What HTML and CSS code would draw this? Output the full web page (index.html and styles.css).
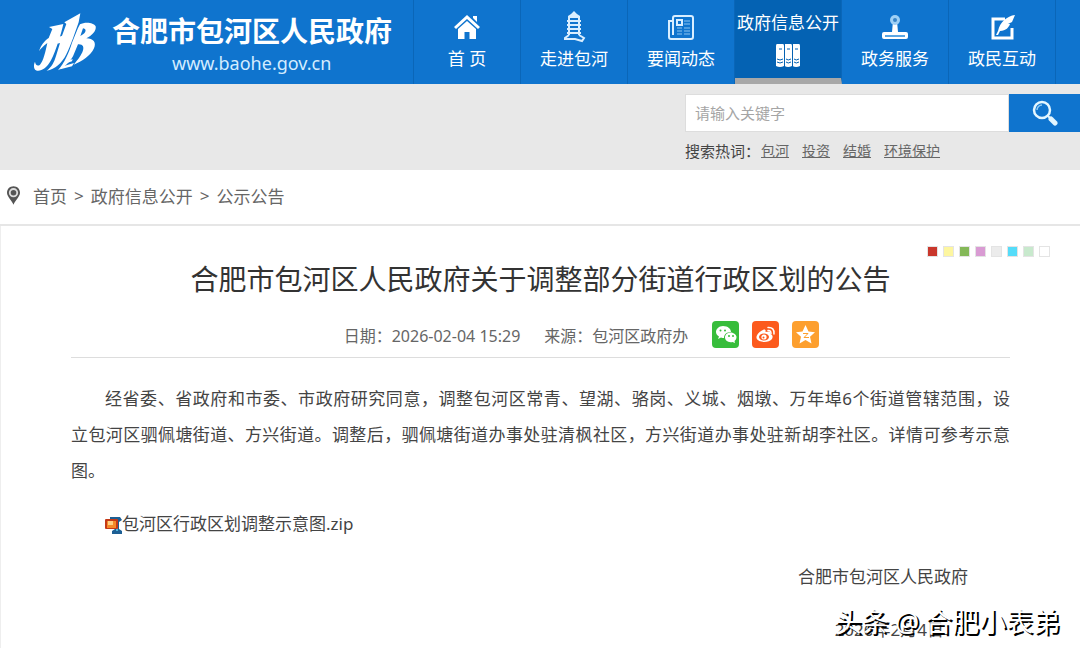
FILE: index.html
```html
<!DOCTYPE html>
<html lang="zh-CN">
<head>
    <meta charset="UTF-8">
    <meta name="viewport" content="width=device-width, initial-scale=1.0">
    <title>合肥市包河区人民政府关于调整部分街道行政区划的公告</title>
    <link rel="stylesheet" href="styles.css">
</head>
<body>
<header class="header">
    <a class="logo" href="#">
        <svg class="logo-mark" viewBox="99 33 192 180" aria-hidden="true">
            <path d="M147 78 L190 69 C184 96 168 150 153 178 C140 202 124 211 111 209 C102 207 99 194 105 182 C106 192 113 197 120 191 C130 181 137 150 142 126 C129 136 122 143 117 151 C123 131 134 119 146 111 L157 84 Z"/>
            <path d="M193 64 L241 37 L236 64 C229 84 211 137 199 160 C186 186 165 206 140 209 C156 197 162 184 168 165 L180 126 L172 128 L176 108 L186 104 L199 69 Z"/>
            <path d="M240 70 C253 62 281 63 287 76 C290 91 275 104 259 112 C280 112 290 125 282 142 C272 164 246 181 221 191 C233 177 240 168 247 154 C254 138 249 129 234 130 L219 166 C208 184 195 198 174 208 C194 184 206 157 216 125 L234 81 Z M249 82 L241 105 C255 99 264 85 249 82 Z" fill-rule="evenodd"/>
            <path d="M192 184 L218 174 L216 181 L190 190 Z M184 197 L222 186 L216 196 L181 205 Z"/>
        </svg>
        <span class="logo-text">
            <span class="logo-name">合肥市包河区人民政府</span>
            <span class="logo-url">www.baohe.gov.cn</span>
        </span>
    </a>
    <nav class="nav">
        <a class="nav-item" href="#">
            <svg class="nav-icon" viewBox="0 0 28 28" aria-hidden="true">
                <path d="M14 2 L27 14 L25 16 L14 6 L3 16 L1 14 Z M20 3 H24 V9 L20 5 Z"/>
                <path d="M14 8 L23 16 V26 H16.500 V19 H11.500 V26 H5 V16 Z"/>
            </svg>
            <span>首 页</span>
        </a>
        <a class="nav-item" href="#">
            <svg class="nav-icon nav-icon-pale" viewBox="0 0 28 28" aria-hidden="true">
                <path d="M14 -2 L17 1 L20 3 V5 H8 V3 L11 1 Z M7 7 H21 V9 H7 Z M7 11 H21 V13 H7 Z M7 15 H21 V17 H7 Z M7 19 H21 V21 H7 Z"/>
                <path d="M9 4 V22 M19 4 V22 M9 22 L5 25 V26 H15 L22 28 L24 25 L19 22" fill="none" stroke="#d9eeff" stroke-width="2"/>
            </svg>
            <span>走进包河</span>
        </a>
        <a class="nav-item" href="#">
            <svg class="nav-icon" viewBox="0 0 28 28" aria-hidden="true">
                <g fill="none" stroke="#d9eeff" stroke-width="2">
                    <path d="M8 3 H24 Q26 3 26 5 V24 Q26 26 24 26 H4 Q2 26 2 24 V8 H6 V21 M6 22 V5 Q6 3 8 3"/>
                    <rect x="10" y="7" width="5" height="5"/>
                </g>
                <path d="M17 8 H23 M17 11 H23 M10 15 H15 M17 15 H23 M10 18 H15 M17 18 H23 M10 21 H15 M17 21 H23" fill="none" stroke="#8cc4f0"/>
            </svg>
            <span>要闻动态</span>
        </a>
        <a class="nav-item nav-item-active" href="#">
            <span>政府信息公开</span>
            <svg class="nav-icon" viewBox="0 0 28 28" aria-hidden="true">
                <path d="M3 3 H9 Q10 3 10 5 V25 Q6 27 2 25 V5 Q2 3 3 3 Z M11 3 H17 Q18 3 18 5 V25 Q14 27 10.500 25 V5 Z M19 3 H25 Q26 3 26 5 V25 Q22 27 18.500 25 V5 Z"/>
                <path d="M10.500 3 V26 M18.500 3 V26 M3 18 Q6 20 9 18 M12 18 Q14 20 17 18 M20 18 Q22 20 25 18 M3 21 Q6 23 9 21 M12 21 Q14 23 17 21 M20 21 Q22 23 25 21 M5 8 H8 M13 8 H16 M21 8 H24" fill="none" stroke="#0462b3"/>
            </svg>
        </a>
        <a class="nav-item" href="#">
            <svg class="nav-icon" viewBox="0 0 28 28" aria-hidden="true">
                <path d="M12 8 H16 L17 19 H25 Q27 19 27 21 V24 Q27 26 25 26 H3 Q1 26 1 24 V21 Q1 19 3 19 H11 Z"/>
                <path d="M4 23 H24" stroke="#5aa6e4" stroke-width="2"/>
                <circle cx="14" cy="7" r="5" fill="#9fd0f5"/>
                <circle cx="14" cy="7" r="2" fill="#3a86c8"/>
            </svg>
            <span>政务服务</span>
        </a>
        <a class="nav-item" href="#">
            <svg class="nav-icon" viewBox="0 0 28 28" aria-hidden="true">
                <path d="M17 6 H5 V25 H24 V15" fill="none" stroke="#fff" stroke-width="3"/>
                <path d="M27 2 C19 3 12 9 10 18 L8 22 L10 22 L12 18 C18 18 21 14 22 11 L20 11 L24 9 Z"/>
            </svg>
            <span>政民互动</span>
        </a>
    </nav>
</header>

<section class="search">
    <form class="search-box">
        <input class="search-input" type="text" placeholder="请输入关键字" aria-label="请输入关键字">
        <button class="search-button" type="button" aria-label="搜索">
            <svg class="search-icon" viewBox="0 0 26 26" aria-hidden="true">
                <circle cx="10" cy="10" r="8" fill="none" stroke="#e3f6ff" stroke-width="2.500"/>
                <path d="M5 10 A5 5 0 0 1 10 5" fill="none" stroke="#8fcaf3" stroke-width="1.500"/>
                <path d="M16 16 L18 18" stroke="#e3f6ff" stroke-width="2"/>
                <path d="M19 19 L23 23" stroke="#e3f6ff" stroke-width="5" stroke-linecap="round"/>
            </svg>
        </button>
    </form>
    <div class="hot-words">
        <span class="hot-label">搜索热词：</span>
        <a href="#">包河</a>
        <a href="#">投资</a>
        <a href="#">结婚</a>
        <a href="#">环境保护</a>
    </div>
</section>

<nav class="breadcrumb">
    <svg class="pin" viewBox="0 0 14 20" aria-hidden="true">
        <path d="M7 0 C11 0 14 3 14 7 C14 11 9 15 7 20 C5 15 0 11 0 7 C0 3 3 0 7 0 Z" fill="#555"/>
        <circle cx="7" cy="7" r="4" fill="#555" stroke="#ddd" stroke-width="2"/>
    </svg>
    <a href="#">首页</a>
    <span>&gt;</span>
    <a href="#">政府信息公开</a>
    <span>&gt;</span>
    <a href="#">公示公告</a>
</nav>

<main class="article">
    <div class="swatches">
        <button class="swatch swatch-red" type="button" aria-label="红色"></button>
        <button class="swatch swatch-yellow" type="button" aria-label="黄色"></button>
        <button class="swatch swatch-green" type="button" aria-label="绿色"></button>
        <button class="swatch swatch-purple" type="button" aria-label="紫色"></button>
        <button class="swatch swatch-gray" type="button" aria-label="灰色"></button>
        <button class="swatch swatch-blue" type="button" aria-label="蓝色"></button>
        <button class="swatch swatch-mint" type="button" aria-label="浅绿"></button>
        <button class="swatch swatch-white" type="button" aria-label="白色"></button>
    </div>
    <h1>合肥市包河区人民政府关于调整部分街道行政区划的公告</h1>
    <div class="meta">
        <span>日期：2026-02-04 15:29</span>
        <span>来源：包河区政府办</span>
        <div class="share">
            <a href="#" aria-label="微信">
                <svg viewBox="0 0 27 27" aria-hidden="true">
                    <rect width="27" height="27" rx="4" fill="#37bd3b"/>
                    <path d="M11 5 C16 5 19 8 19 11 C15 11 12 13 12 17 C11 17 10 17 9 16.500 L6 18 L7 15.500 C5 14 4 13 4 11 C4 8 7 5 11 5 Z" fill="#fff"/>
                    <path d="M18.500 11.500 C22 11.500 24.500 14 24.500 16 C24.500 18 23.500 19 22.500 20 L23 22 L20.500 21 C16 22 13 19 13 16.500 C13 14 15 11.500 18.500 11.500 Z" fill="#fff"/>
                    <g fill="#37bd3b"><circle cx="8.500" cy="9.500" r="1"/><circle cx="13" cy="9.500" r="1"/><circle cx="17" cy="15" r="1"/><circle cx="21" cy="15" r="1"/></g>
                </svg>
            </a>
            <a href="#" aria-label="微博">
                <svg viewBox="0 0 27 27" aria-hidden="true">
                    <rect width="27" height="27" rx="4" fill="#fc5a1d"/>
                    <path d="M11 9 C13 8 14 9 13.500 11 C17 10 19 10 18.500 13 C21 14 21 16 20 18 C17 22 6 22 4.500 17 C4 14 8 10 11 9 Z" fill="#fff"/>
                    <ellipse cx="12" cy="16" rx="5" ry="3.500" fill="#fc5a1d"/>
                    <circle cx="12" cy="16" r="2.600" fill="#fff"/>
                    <circle cx="11.500" cy="16.500" r="1" fill="#fc5a1d"/>
                    <path d="M16 9.500 Q19 9 19 12.500 M16 6.500 Q22.500 6 22 13" fill="none" stroke="#fff" stroke-width="1.500" stroke-linecap="round"/>
                </svg>
            </a>
            <a href="#" aria-label="QQ空间">
                <svg viewBox="0 0 27 27" aria-hidden="true">
                    <rect width="27" height="27" rx="4" fill="#fd9f2e"/>
                    <path d="M13.500 4 L16.500 10.500 L23 11.200 L18 15.800 L19.500 22.500 L13.500 19 L7.500 22.500 L9 15.800 L4 11.200 L10.500 10.500 Z" fill="#fff"/>
                    <path d="M11 12.500 H16 L12 16.500 H17" fill="none" stroke="#fd9f2e"/>
                </svg>
            </a>
        </div>
    </div>
    <div class="content">
        <p>经省委、省政府和市委、市政府研究同意，调整包河区常青、望湖、骆岗、义城、烟墩、万年埠6个街道管辖范围，设<span class="keep">立包</span>河区驷佩塘街道、方兴街道。调整后，驷佩塘街道办事处驻清枫社区，方兴街道办事处驻新胡李社区。详情可参考示意图。</p>
        <p><a class="attachment" href="#"><svg class="zip-icon" viewBox="0 0 17 18" aria-hidden="true">
            <path d="M5 1 H15 L17 4 L14 6 V13 L17 15 V18 H7 V15 L10 13 V6 L5 3 Z" fill="#1d5f94"/>
            <path d="M11 5 H13 V15 H11 Z" fill="#4cb5dc"/>
            <rect x="0" y="3" width="13" height="10" rx="1" fill="#c43a18"/>
            <rect x="2" y="5" width="9" height="7" fill="#f58a28"/>
            <rect x="3" y="5" width="5" height="4" fill="#ffd083"/>
        </svg>包河区行政区划调整示意图.zip</a></p>
        <p class="sign">合肥市包河区人民政府</p>
        <p class="sign sign-date">2026年2月4日</p>
    </div>
    <div class="watermark">
        <span>头条</span>
        <span>@</span>
        <span>合肥小表弟</span>
    </div>
</main>
</body>
</html>
```
FILE: styles.css
```css
* {
    box-sizing: border-box;
}

body {
    margin: 0;
    font-family: "Noto Sans", "Noto Sans CJK SC", sans-serif;
    font-size: 17px;
    color: #444;
    background-color: #fff;
}

a {
    color: inherit;
    text-decoration: none;
}

button {
    padding: 0;
    border: none;
    cursor: pointer;
}

.header {
    display: flex;
    height: 84px;
    background-color: #0f74ce;
    color: #fff;
}

.logo {
    display: flex;
    align-items: center;
    gap: 15px;
    width: 413px;
    padding-left: 33px;
}

.logo-mark {
    width: 64px;
    height: 60px;
    fill: #fff;
}

.logo-text {
    display: flex;
    flex-direction: column;
    padding-top: 5px;
}

.logo-name {
    font-size: 28px;
    font-weight: bold;
    line-height: 36px;
}

.logo-url {
    padding-left: 60px;
    font-size: 18px;
    line-height: 28px;
    color: #d3ecff;
}

.nav {
    display: flex;
    flex: 1;
    border-left: 1px solid #0a66b8;
}

.nav-item {
    display: flex;
    flex-direction: column;
    align-items: center;
    gap: 4px;
    width: 107px;
    padding-top: 13px;
    border-right: 1px solid #0a66b8;
    font-size: 17px;
    line-height: 28px;
    white-space: nowrap;
}

.nav-icon {
    width: 28px;
    height: 28px;
    overflow: visible;
    fill: #fff;
}

.nav-icon-pale {
    fill: #d9eeff;
}

.nav-item-active {
    padding-top: 9px;
    border-bottom: 6px solid #a8a8a8;
    background-color: #0462b3;
}

.search {
    display: flex;
    flex-direction: column;
    align-items: flex-end;
    height: 86px;
    padding-top: 10px;
    background-color: #e8e8e8;
}

.search-box {
    display: flex;
    width: 395px;
    height: 38px;
}

.search-input {
    flex: 1;
    min-width: 0;
    padding: 0 9px;
    border: 1px solid #ddd;
    font-family: inherit;
    font-size: 15px;
    background-color: #fff;
}

.search-input::placeholder {
    color: #a5a5a5;
}

.search-button {
    width: 71px;
    background-color: #0f74ce;
}

.search-icon {
    display: block;
    width: 26px;
    height: 26px;
    margin: 0 auto;
}

.hot-words {
    display: flex;
    align-items: center;
    gap: 13px;
    width: 395px;
    height: 36px;
    font-size: 14px;
    color: #666;
}

.hot-words a {
    text-decoration: underline;
}

.hot-label {
    margin-right: -12px;
    font-size: 15px;
    color: #444;
}

.breadcrumb {
    display: flex;
    align-items: center;
    gap: 7px;
    height: 56px;
    padding: 0 7px 3px;
    border-bottom: 2px solid #e6e6e6;
    color: #666;
}

.pin {
    width: 13px;
    height: 19px;
    margin-right: 6px;
}

.article {
    position: relative;
    padding: 20px 70px 0;
    border-left: 1px solid #eee;
}

.swatches {
    display: flex;
    justify-content: flex-end;
    gap: 5px;
    margin-right: -40px;
}

.swatch {
    width: 11px;
    height: 11px;
    border: 1px solid #e4e4e4;
}

.swatch-red {
    background-color: #c9372c;
}

.swatch-yellow {
    background-color: #fdf6a0;
}

.swatch-green {
    background-color: #84b858;
}

.swatch-purple {
    background-color: #d99bd3;
}

.swatch-gray {
    background-color: #ececec;
}

.swatch-blue {
    background-color: #55dcf9;
}

.swatch-mint {
    background-color: #c8e9cd;
}

.swatch-white {
    background-color: #fff;
}

h1 {
    margin: 0;
    font-size: 28px;
    font-weight: normal;
    line-height: 44px;
    text-align: center;
    color: #333;
}

.meta {
    display: flex;
    justify-content: center;
    align-items: center;
    gap: 24px;
    height: 57px;
    padding: 10px 0 0 82px;
    border-bottom: 1px solid #ddd;
    font-size: 16px;
    line-height: 26px;
    color: #666;
}

.meta span {
    padding-top: 3px;
}

.share {
    display: flex;
    gap: 13px;
}

.share svg {
    display: block;
    width: 27px;
    height: 27px;
}

.content {
    padding-top: 23px;
    line-height: 36px;
}

.content p {
    margin: 0 0 17px;
    text-align: justify;
    text-indent: 2em;
}

.keep {
    white-space: nowrap;
}

.zip-icon {
    width: 17px;
    height: 18px;
    vertical-align: middle;
}

.content .sign {
    padding-right: 42px;
    text-align: right;
}

.content .sign-date {
    margin-bottom: 0;
    padding-right: 66px;
}

/* sits over the date line */
.watermark {
    position: absolute;
    right: 20px;
    bottom: 4px;
    display: flex;
    gap: 6px;
    font-size: 27px;
    line-height: 44px;
    color: #fff;
    text-shadow: 2px 2px 0 #000;
}
```
